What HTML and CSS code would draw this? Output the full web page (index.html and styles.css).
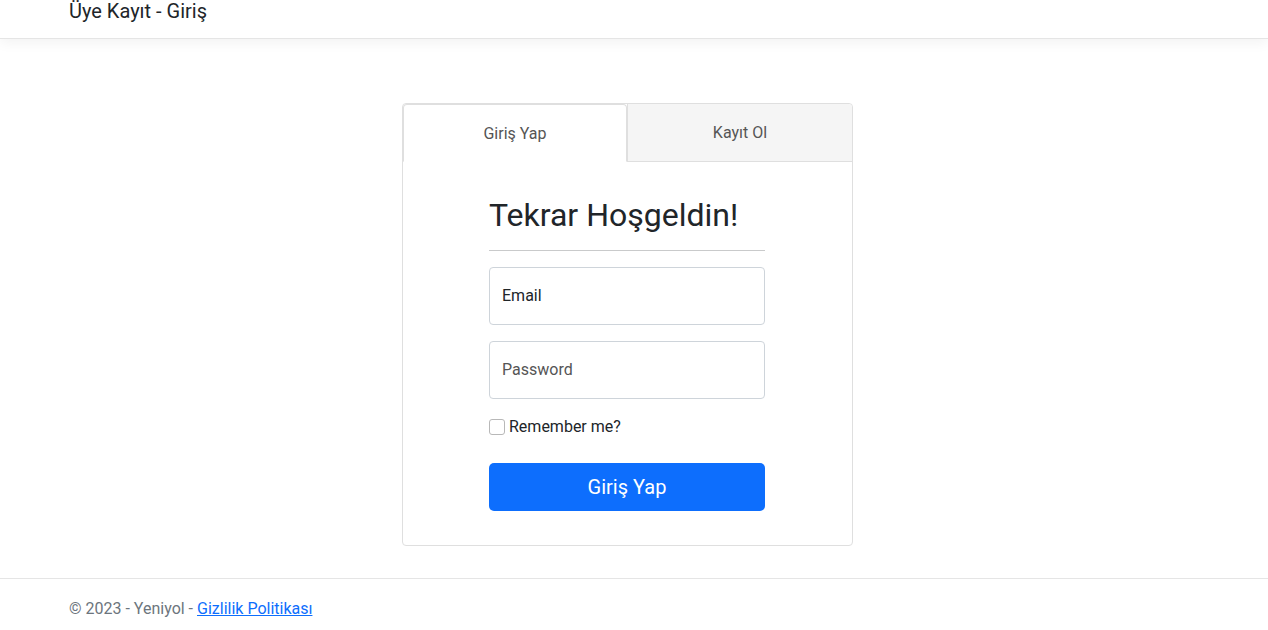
FILE: index.html
```html
<!DOCTYPE html>
<html lang="tr">
<head>
<meta charset="utf-8">
<title>Üye Kayıt - Giriş</title>
<link rel="stylesheet" href="styles.css">
</head>
<body>
<header class="topbar">
  <div class="container">
    <a class="brand" href="#">Üye Kayıt - Giriş</a>
  </div>
</header>
<main class="main">
  <div class="card">
    <div class="tabs">
      <div class="tab active">Giriş Yap</div>
      <div class="tab">Kayıt Ol</div>
    </div>
    <div class="card-body">
      <form class="form">
        <h2 class="title">Tekrar Hoşgeldin!</h2>
        <hr class="rule">
        <div class="field"><span class="ph ph-dark">Email</span></div>
        <div class="field"><span class="ph">Password</span></div>
        <label class="check"><span class="box"></span><span>Remember me?</span></label>
        <button type="button" class="btn">Giriş Yap</button>
      </form>
    </div>
  </div>
</main>
<footer class="footer">
  <div class="container">© 2023 - Yeniyol - <a href="#" class="link">Gizlilik Politikası</a></div>
</footer>
</body>
</html>
```
FILE: styles.css
```css
* { box-sizing: border-box; }
html, body { margin: 0; padding: 0; }
body {
  font-family: Roboto, "Liberation Sans", sans-serif;
  font-size: 16px;
  color: #212529;
  background: #fff;
  width: 1268px;
  height: 630px;
  overflow: hidden;
}
.container { padding-left: 69px; }
.topbar {
  height: 39px;
  border-bottom: 1px solid #e5e5e5;
  box-shadow: 0 4px 12px rgba(0,0,0,.05);
}
.brand {
  display: block;
  font-size: 20px;
  line-height: 22px;
  color: #212529;
  text-decoration: none;
}
.main {
  padding: 64px 0 32px 402px;
}
.card {
  width: 451px;
  border: 1px solid #dfdfdf;
  border-radius: 4px;
  background: #fff;
}
.tabs {
  display: flex;
  height: 58px;
}
.tab {
  flex: 1;
  display: flex;
  align-items: center;
  justify-content: center;
  font-size: 16px;
  color: #555;
  background: #f5f5f5;
  border-bottom: 1px solid #dfdfdf;
  border-left: 1px solid #dfdfdf;
  border-top-right-radius: 4px;
}
.tab.active {
  flex: 0 0 224px;
  background: #fff;
  border: 1px solid #dfdfdf;
  border-bottom-color: #fff;
  border-radius: 4px 4px 0 0;
}
.card-body {
  padding: 34px 0 34px 86px;
  display: flex;
}
.form {
  width: 276px;
  display: flex;
  flex-direction: column;
}
.title {
  margin: 0 0 8px;
  font-size: 32px;
  font-weight: 400;
  line-height: 38px;
}
.rule {
  margin: 8px 0 16px;
  border: 0;
  border-top: 1px solid #c9cacb;
}
.field {
  height: 58px;
  border: 1px solid #ced4da;
  border-radius: 4px;
  padding: 0 12px;
  display: flex;
  align-items: center;
  margin-bottom: 16px;
}
.ph { color: #555; font-size: 16px; padding-bottom: 2px; }
.ph-dark { color: #212529; }
.check {
  display: flex;
  align-items: center;
  gap: 4px;
  line-height: 24px;
  height: 24px;
  margin-bottom: 24px;
}
.box {
  width: 16px;
  height: 16px;
  border: 1px solid #b8b8b8;
  border-radius: 3px;
  background: #fff;
}
.btn {
  height: 48px;
  border: 0;
  border-radius: 5px;
  background: #0d6efd;
  color: #fff;
  font-family: Roboto, "Liberation Sans", sans-serif;
  font-size: 20px;
  line-height: 30px;
}
.footer {
  border-top: 1px solid #e5e5e5;
  line-height: 60px;
  color: #6c757d;
  font-size: 16px;
}
.link { color: #0d6efd; text-decoration: underline; }
```
